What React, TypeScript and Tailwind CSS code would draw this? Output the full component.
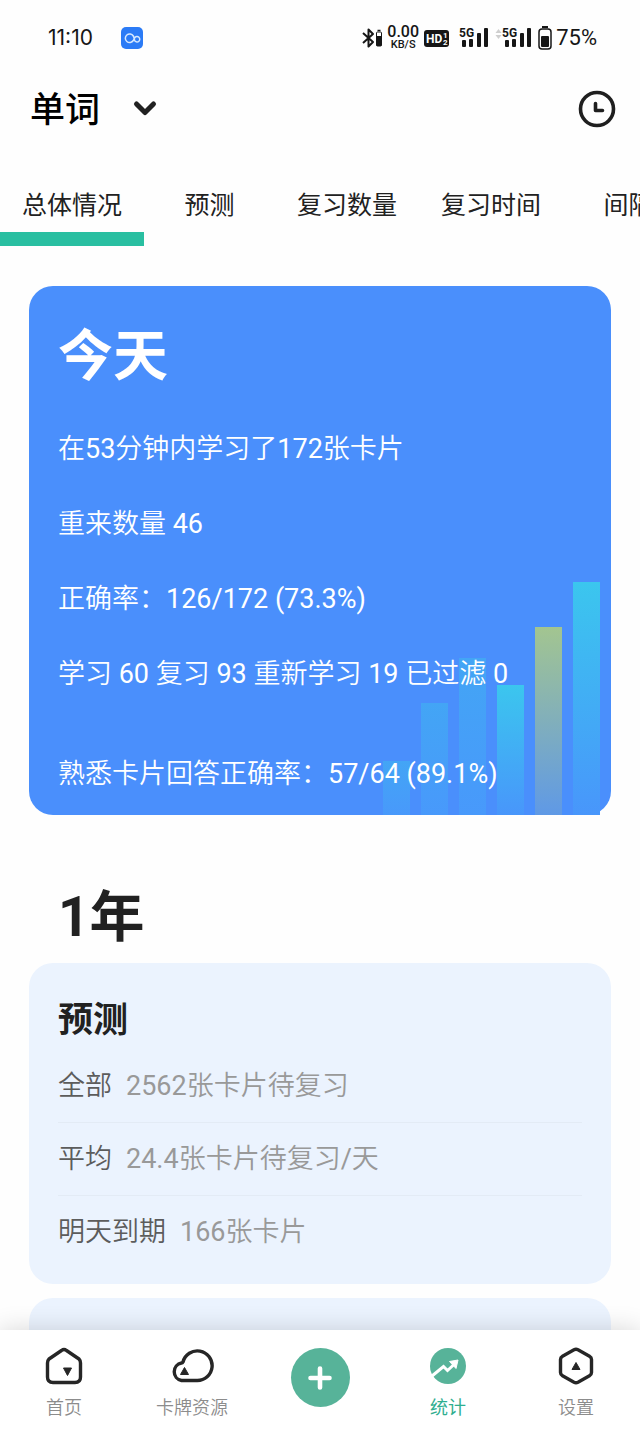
import React from "react";
import { useState } from "react";

const tabs = ["总体情况", "预测", "复习数量", "复习时间", "间隔"];

const todayLines = ["在53分钟内学习了172张卡片", "重来数量 46", "正确率：126/172 (73.3%)", "学习 60 复习 93 重新学习 19 已过滤 0"];

const forecast = [
    { label: "全部", value: "2562张卡片待复习" },
    { label: "平均", value: "24.4张卡片待复习/天" },
    { label: "明天到期", value: "166张卡片" },
];

// Decorative bars in the corner of the blue card
const bars = [
    { x: 1, y: 179, fill: "url(#faint)" },
    { x: 39, y: 121, fill: "url(#faint)" },
    { x: 77, y: 76, fill: "url(#faint)" },
    { x: 115, y: 103, fill: "url(#cyan)" },
    { x: 153, y: 45, fill: "url(#olive)" },
    { x: 191, y: 0, fill: "url(#cyan)" },
];

function Signal() {
    return (
        <svg width="30" height="22" viewBox="0 0 30 22" fill="#161616">
            <text x="0" y="10" fontSize="12" fontWeight="700" fontFamily="Roboto, sans-serif">
                5G
            </text>
            <rect x="3" y="13" width="4" height="7" rx="1" />
            <rect x="10" y="12" width="4" height="8" rx="1" />
            <rect x="18" y="6" width="4" height="14" rx="1" />
            <rect x="25" y="1" width="4" height="19" rx="1" />
        </svg>
    );
}

function StatusBar() {
    return (
        <div className="flex h-[76px] shrink-0 items-center pr-[43px] pl-12 font-['Roboto'] text-[#161616]">
            <span className="font-['Inter'] text-[21px] leading-6">11:10</span>
            <svg className="ml-7" width="22" height="22" viewBox="0 0 22 22" fill="none">
                <rect width="22" height="22" rx="5" fill="#2b7bf6" />
                <path
                    d="M12.300 13.500A4.300 4.300 0 1 1 12.300 9C13.500 11 13 12.500 14 14A2.700 2.700 0 1 0 14 10.500C13.200 11.500 13 12.500 12.300 13.500"
                    stroke="#d5e8ff"
                    strokeWidth="1.500"
                    strokeLinecap="round"
                />
            </svg>
            <div className="ml-auto flex items-center">
                <svg width="22" height="22" viewBox="0 0 22 22" fill="none">
                    <path d="M2 6L12 15L7.500 19.500V2.500L12 7L2 16" stroke="#161616" strokeWidth="2" strokeLinejoin="round" />
                    <rect x="15.500" y="5" width="5" height="14" rx="1" stroke="#161616" />
                    <rect x="15.500" y="9" width="5" height="10" fill="#161616" />
                    <path d="M16.500 3.500H19.500" stroke="#161616" strokeWidth="1.500" />
                </svg>
                <div className="ml-1 flex w-8 flex-col items-center font-medium">
                    <span className="text-[16px] leading-[13px]">0.00</span>
                    <span className="text-[11px] leading-[13px]">KB/S</span>
                </div>
                <svg className="ml-[5px]" width="25" height="17" viewBox="0 0 25 17">
                    <rect width="25" height="17" rx="3" fill="#161616" />
                    <g fill="#fff" fontFamily="Roboto, sans-serif" fontWeight="700">
                        <text x="2" y="13" fontSize="12">HD</text>
                        <text x="19" y="8" fontSize="8">1</text>
                        <text x="19" y="15" fontSize="8">2</text>
                    </g>
                </svg>
                <div className="ml-[10px]">
                    <Signal />
                </div>
                <svg className="ml-[6px]" width="7" height="22" viewBox="0 0 7 22" fill="#cfcfcf">
                    <path d="M0.500 6L3.500 2L6.500 6ZM0.500 8L3.500 12L6.500 8Z" />
                </svg>
                <Signal />
                <svg className="ml-[6px]" width="14" height="24" viewBox="0 0 14 24" fill="none">
                    <path d="M4 1H10" stroke="#161616" strokeWidth="2" />
                    <rect x="1" y="3" width="12" height="20" rx="3" stroke="#161616" strokeWidth="1.500" />
                    <rect x="3" y="10" width="8" height="11" rx="1" fill="#161616" />
                </svg>
                <span className="ml-1 text-[22px] leading-6">75%</span>
            </div>
        </div>
    );
}

function Home() {
    return (
        <svg width="40" height="40" viewBox="0 0 40 40" fill="none">
            <path
                d="M17.500 4.500Q20 2.500 22.500 4.500L35 13Q36.500 14.500 36.500 17V31Q36.500 36.500 31 36.500H9Q3.500 36.500 3.500 31V17Q3.500 14.500 5 13Z"
                stroke="#262626"
                strokeWidth="3.400"
                strokeLinejoin="round"
            />
            <path d="M19.500 22H27.500L23.500 29.500Z" fill="#262626" stroke="#262626" strokeWidth="1" strokeLinejoin="round" />
        </svg>
    );
}

function Cloud() {
    return (
        <svg width="44" height="40" viewBox="0 0 44 40" fill="none">
            <path
                d="M11.500 34.500A8.900 8.900 0 0 1 11.500 17Q12.500 17 13 16A14.800 14.800 0 1 1 27 34.500Z"
                stroke="#262626"
                strokeWidth="3.400"
                strokeLinejoin="round"
            />
            <path d="M10.500 28.500H18.500L14.500 21.500Z" fill="#262626" stroke="#262626" strokeWidth="1" strokeLinejoin="round" />
        </svg>
    );
}

function Stats() {
    return (
        <svg width="40" height="40" viewBox="0 0 40 40" fill="none">
            <circle cx="20" cy="20" r="18" fill="#57b399" />
            <path d="M4 30L15.500 20.500L19.500 24.500L26 18.500" stroke="#fff" strokeWidth="3" />
            <path d="M21.500 15.500L30 14L28 22.500Z" fill="#fff" stroke="#fff" strokeWidth="1" strokeLinejoin="round" />
        </svg>
    );
}

function Settings() {
    return (
        <svg width="40" height="40" viewBox="0 0 40 40" fill="none">
            <path
                d="M18 3.800Q20 2.800 22 3.800L33.500 10.200Q35.500 11.300 35.500 13.500V26.500Q35.500 28.700 33.500 29.800L22 36.200Q20 37.200 18 36.200L6.500 29.800Q4.500 28.700 4.500 26.500V13.500Q4.500 11.300 6.500 10.200Z"
                stroke="#262626"
                strokeWidth="3.400"
            />
            <path d="M16 23.500H24L20 16.500Z" fill="#262626" stroke="#262626" strokeWidth="1" strokeLinejoin="round" />
        </svg>
    );
}

function NavItem({ label, active, children }: { label: string; active?: boolean; children: React.ReactNode }) {
    return (
        <a href="#" className="flex flex-col items-center pt-4">
            {children}
            <span className={active ? "mt-[10px] text-[18px] leading-6 text-[#2fae8f]" : "mt-[10px] text-[18px] leading-6 font-[350] text-[#8c8c8c]"}>
                {label}
            </span>
        </a>
    );
}

function App() {
    const [activeTab, setActiveTab] = useState("总体情况");

    return (
        <div className="flex h-screen flex-col overflow-hidden bg-[#fefefe] font-['Roboto','Noto_Sans_CJK_SC',sans-serif] text-[#212121]">
            <StatusBar />

            <header className="flex h-[66px] shrink-0 items-center justify-between pr-6 pl-[30px]">
                <button className="flex items-center text-[35px] leading-10 font-medium text-black">
                    <span className="pt-1">单词</span>
                    <svg className="ml-8" width="26" height="20" viewBox="0 0 26 20" fill="none">
                        <path d="M4.500 5L13 13.500L21.500 5" stroke="#212121" strokeWidth="5" strokeLinecap="round" strokeLinejoin="round" />
                    </svg>
                </button>
                <button aria-label="历史">
                    <svg width="38" height="38" viewBox="0 0 38 38" fill="none" stroke="#1f1f1f" strokeLinecap="round" strokeLinejoin="round">
                        <circle cx="19" cy="19" r="16.500" strokeWidth="3.600" />
                        <path d="M17.500 13.500V20.500H24.500" strokeWidth="3.600" />
                    </svg>
                </button>
            </header>

            <nav className="mt-[22px] flex h-[82px] shrink-0 overflow-hidden">
                {tabs.map((tab) => (
                    <button
                        key={tab}
                        onClick={() => setActiveTab(tab)}
                        className="flex min-w-[131px] shrink-0 flex-col text-[25px] leading-10"
                    >
                        <span className="mt-[22px] w-full px-[22px] text-center">{tab}</span>
                        {tab === activeTab && <span className="mt-auto h-[14px] w-full bg-[#29bfa1]" />}
                    </button>
                ))}
            </nav>

            <main className="min-h-0 flex-1 overflow-hidden px-[29px] pt-10">
                <section className="relative rounded-3xl bg-[#4a8ffc] px-[29px] pt-10 pb-[3px] text-white">
                    <svg className="absolute right-[10px] bottom-0" width="219" height="233" viewBox="0 0 219 233">
                        <defs>
                            <linearGradient id="faint" x1="0" y1="0" x2="0" y2="1">
                                <stop offset="0" stopColor="#43a5f5" />
                                <stop offset="1" stopColor="#4899fb" />
                            </linearGradient>
                            <linearGradient id="cyan" x1="0" y1="0" x2="0" y2="1">
                                <stop offset="0" stopColor="#3bc6ee" />
                                <stop offset="1" stopColor="#4896fb" />
                            </linearGradient>
                            <linearGradient id="olive" x1="0" y1="0" x2="0" y2="1">
                                <stop offset="0" stopColor="#a3c590" />
                                <stop offset="1" stopColor="#5f99e6" />
                            </linearGradient>
                        </defs>
                        {bars.map((bar) => (
                            <rect key={bar.x} x={bar.x} y={bar.y} width="27" height={233 - bar.y} fill={bar.fill} />
                        ))}
                    </svg>
                    <div className="relative font-['Roboto','Noto_Sans_CJK_SC_DemiLight','Noto_Sans_CJK_SC',sans-serif]">
                        <h1 className="mb-[26px] font-['Roboto','Noto_Sans_CJK_SC',sans-serif] text-[55px] leading-[60px] font-bold">今天</h1>
                        {todayLines.map((line) => (
                            <p key={line} className="text-[27px] leading-[75px]">
                                {line}
                            </p>
                        ))}
                        <p className="mt-[25px] text-[27px] leading-[75px]">熟悉卡片回答正确率：57/64 (89.1%)</p>
                    </div>
                </section>

                <h1 className="mt-[72px] px-[29px] text-[55px] leading-[60px] font-bold">1年</h1>

                <section className="mt-4 rounded-3xl bg-[#ebf3fe] px-[29px] pt-[38px] pb-[15px]">
                    <h2 className="mb-[9px] text-[35px] leading-10 font-bold">预测</h2>
                    {forecast.map((row) => (
                        <p
                            key={row.label}
                            className="h-[73px] border-b border-[#e3ebf5] font-['Roboto','Noto_Sans_CJK_SC_DemiLight','Noto_Sans_CJK_SC',sans-serif] text-[27px] leading-[73px] text-[#999] last:border-b-0"
                        >
                            <span className="mr-[14px] text-[#5c5c5c]">{row.label}</span>
                            {row.value}
                        </p>
                    ))}
                </section>

                <section className="mt-[14px] h-80 rounded-3xl bg-[#ebf3fe]" />
            </main>

            <nav className="relative grid h-[101px] shrink-0 grid-cols-5 bg-white shadow-[0_0_24px_rgba(0,0,0,0.16)]">
                <NavItem label="首页">
                    <Home />
                </NavItem>
                <NavItem label="卡牌资源">
                    <Cloud />
                </NavItem>
                <div className="flex justify-center pt-[18px]">
                    <button aria-label="添加" className="flex size-[59px] items-center justify-center rounded-full bg-[#57b399]">
                        <svg width="26" height="26" viewBox="0 0 26 26" stroke="#fff" strokeWidth="4.600" strokeLinecap="round">
                            <path d="M13 3.500V22.500M3.500 13H22.500" />
                        </svg>
                    </button>
                </div>
                <NavItem label="统计" active>
                    <Stats />
                </NavItem>
                <NavItem label="设置">
                    <Settings />
                </NavItem>
            </nav>
        </div>
    );
}

export default App;
